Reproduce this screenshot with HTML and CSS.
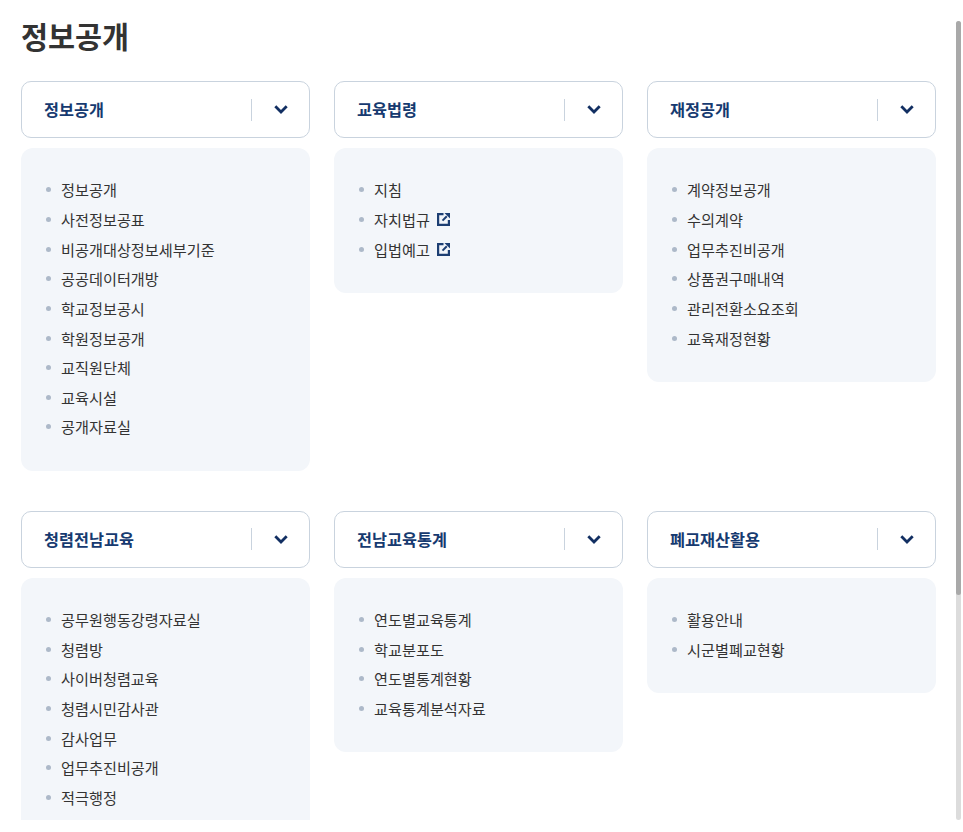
FILE: index.html
```html
<!DOCTYPE html>
<html lang="ko">
<head>
<meta charset="utf-8">
<title>정보공개</title>
<link rel="stylesheet" href="styles.css">
</head>
<body>
<svg class="defs" width="0" height="0" aria-hidden="true">
  <symbol id="chev" viewBox="0 0 14 9"><path d="M1.300 1.300 7 7l5.700-5.700" fill="none" stroke="#122f62" stroke-width="2.800"/></symbol>
  <symbol id="ext" viewBox="0 0 13 13"><path d="M6.500 1.100H1.100v10.800h10.800V7" fill="none" stroke="#1d3f73" stroke-width="2.200"/><path d="M5.500 7.600 9.800 3.300" fill="none" stroke="#1d3f73" stroke-width="2"/><path d="M7.500 0H13v5.500z" fill="#1d3f73"/></symbol>
</svg>
<main class="page">
  <h1 class="title">정보공개</h1>
  <div class="grid">
    <section class="card">
      <div class="head"><h2>정보공개</h2><span class="toggle"><svg class="chev"><use href="#chev"/></svg></span></div>
      <ul class="list">
        <li>정보공개</li><li>사전정보공표</li><li>비공개대상정보세부기준</li><li>공공데이터개방</li><li>학교정보공시</li><li>학원정보공개</li><li>교직원단체</li><li>교육시설</li><li>공개자료실</li>
      </ul>
    </section>
    <section class="card">
      <div class="head"><h2>교육법령</h2><span class="toggle"><svg class="chev"><use href="#chev"/></svg></span></div>
      <ul class="list">
        <li>지침</li><li>자치법규<svg class="ext"><use href="#ext"/></svg></li><li>입법예고<svg class="ext"><use href="#ext"/></svg></li>
      </ul>
    </section>
    <section class="card">
      <div class="head"><h2>재정공개</h2><span class="toggle"><svg class="chev"><use href="#chev"/></svg></span></div>
      <ul class="list">
        <li>계약정보공개</li><li>수의계약</li><li>업무추진비공개</li><li>상품권구매내역</li><li>관리전환소요조회</li><li>교육재정현황</li>
      </ul>
    </section>
    <section class="card">
      <div class="head"><h2>청렴전남교육</h2><span class="toggle"><svg class="chev"><use href="#chev"/></svg></span></div>
      <ul class="list">
        <li>공무원행동강령자료실</li><li>청렴방</li><li>사이버청렴교육</li><li>청렴시민감사관</li><li>감사업무</li><li>업무추진비공개</li><li>적극행정</li>
      </ul>
    </section>
    <section class="card">
      <div class="head"><h2>전남교육통계</h2><span class="toggle"><svg class="chev"><use href="#chev"/></svg></span></div>
      <ul class="list">
        <li>연도별교육통계</li><li>학교분포도</li><li>연도별통계현황</li><li>교육통계분석자료</li>
      </ul>
    </section>
    <section class="card">
      <div class="head"><h2>폐교재산활용</h2><span class="toggle"><svg class="chev"><use href="#chev"/></svg></span></div>
      <ul class="list">
        <li>활용안내</li><li>시군별폐교현황</li>
      </ul>
    </section>
  </div>
</main>
<div class="scrollbar"><div class="thumb"></div></div>
</body>
</html>
```
FILE: styles.css
```css
* { box-sizing: border-box; }
html, body { margin: 0; height: 100%; overflow: hidden; background: #fff; }
body { font-family: "Noto Sans CJK KR", "Noto Sans", sans-serif; color: #333; position: relative; }
.defs { position: absolute; }
.page { height: 820px; overflow: hidden; padding: 12px 27px 0 21px; }
.title { margin: 0 0 22px; font-size: 29.400px; line-height: 47px; font-weight: 700; color: #333; }
.grid { display: grid; grid-template-columns: repeat(3, 289px); column-gap: 24px; row-gap: 40px; align-items: start; }
.head { height: 57px; border: 1px solid #c9d3de; border-radius: 10px; background: #fff; display: flex; align-items: center; justify-content: space-between; padding-left: 22px; }
.head h2 { margin: 0; font-size: 16.300px; font-weight: 700; color: #163a70; line-height: 25px; }
.toggle { width: 58px; height: 22px; border-left: 1px solid #c9d3de; display: flex; align-items: center; justify-content: center; }
.chev { width: 14px; height: 9px; display: block; }
.list { list-style: none; margin: 10px 0 0; padding: 27.350px 24px 28.650px 24px; background: #f3f6fa; border-radius: 12px; }
.list li { position: relative; padding-left: 16px; height: 29.650px; line-height: 29.650px; font-size: 15.200px; color: #333; display: flex; align-items: center; }
.list li::before { content: ""; position: absolute; left: 1px; top: 12px; width: 5px; height: 5px; border-radius: 50%; background: #adb9c9; }
.ext { width: 13px; height: 13px; margin-left: 7px; }
.scrollbar { position: absolute; left: 956px; top: 21px; width: 5px; height: 799px; background: #dcdcdc; border-radius: 3px; }
.thumb { height: 574px; background: #a9a9a9; border-radius: 3px; }
```
